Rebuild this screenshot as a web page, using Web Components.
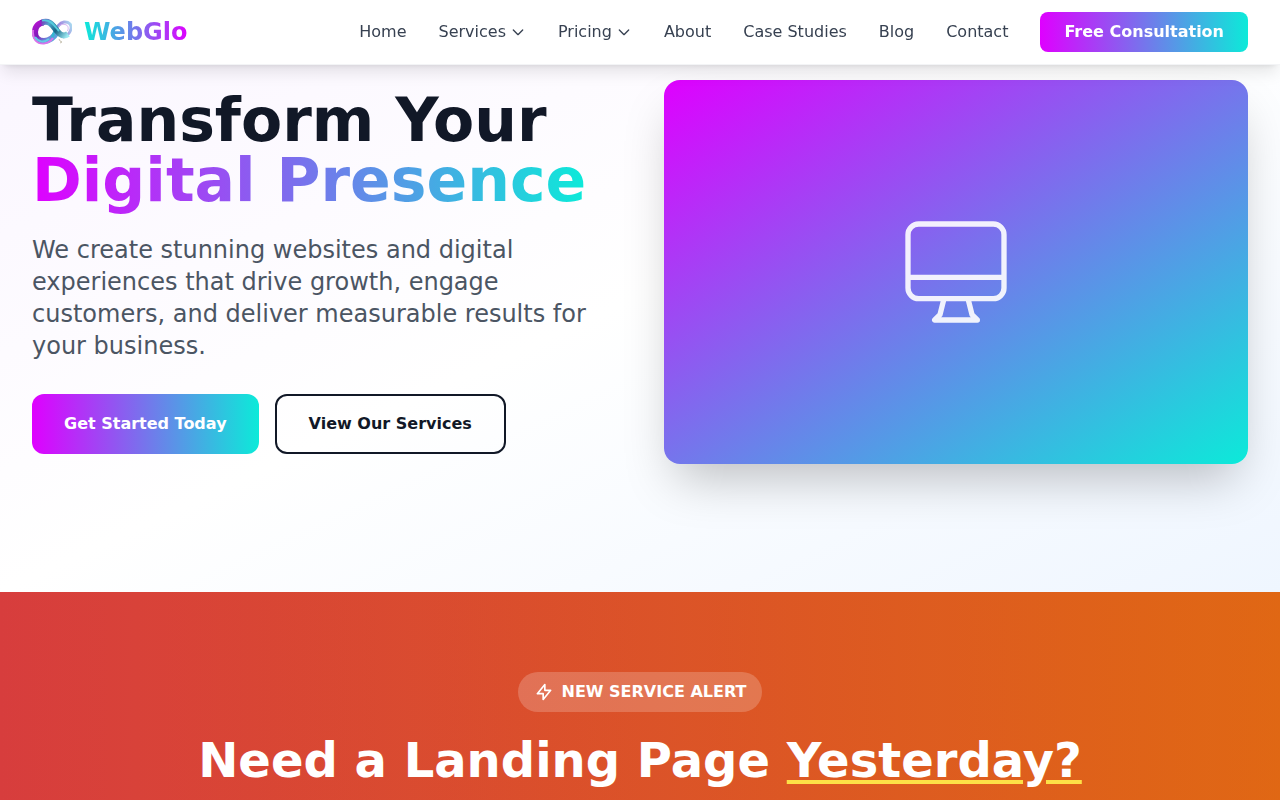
<!DOCTYPE html>
<html lang="en">
<head>
<meta charset="utf-8">
<meta name="viewport" content="width=device-width, initial-scale=1">
<title>WebGlo</title>
<style>
  :root {
    --magenta: #df00ff;
    --teal: #0cead9;
    --ink: #111827;
    --brand: linear-gradient(90deg, var(--magenta), var(--teal));
  }
  body {
    margin: 0;
    background: #fff;
    color: var(--ink);
    font: 16px/24px "DejaVu Sans", sans-serif;
  }
</style>
</head>
<body>
<site-header>
  <site-logo slot="brand">WebGlo</site-logo>
  <nav-link href="#home">Home</nav-link>
  <nav-link href="#services" menu>Services</nav-link>
  <nav-link href="#pricing" menu>Pricing</nav-link>
  <nav-link href="#about">About</nav-link>
  <nav-link href="#cases">Case Studies</nav-link>
  <nav-link href="#blog">Blog</nav-link>
  <nav-link href="#contact">Contact</nav-link>
  <action-link href="#consultation" variant="compact">Free Consultation</action-link>
</site-header>
<main>
  <hero-section>
    <span slot="title">Transform Your</span>
    <span slot="accent">Digital Presence</span>
    <span slot="lead">We create stunning websites and digital experiences that drive growth, engage customers, and deliver measurable results for your business.</span>
    <action-link slot="actions" href="#start">Get Started Today</action-link>
    <action-link slot="actions" href="#services" variant="outline">View Our Services</action-link>
  </hero-section>
  <alert-section>
    <span slot="badge">NEW SERVICE ALERT</span>
    <span slot="title">Need a Landing Page</span>
    <span slot="accent">Yesterday?</span>
  </alert-section>
</main>

<script>
  function define(name, html, setup) {
    const template = document.createElement('template');
    template.innerHTML = html;
    customElements.define(name, class extends HTMLElement {
      constructor() {
        super();
        this.attachShadow({ mode: 'open' }).append(template.content.cloneNode(true));
      }
      connectedCallback() {
        if (setup) setup(this, this.shadowRoot);
      }
    });
  }

  const passHref = (host, root) => {
    root.querySelector('a').href = host.getAttribute('href') || '#';
  };

  define('site-logo', `
    <style>
      :host { display: block; }
      a { display: flex; align-items: center; gap: 12px; text-decoration: none; }
      svg { display: block; width: 40px; height: 40px; }
      span {
        font-size: 24px; line-height: 32px; font-weight: 700;
        background: linear-gradient(90deg, var(--teal), var(--magenta));
        -webkit-background-clip: text; background-clip: text; color: transparent;
      }
    </style>
    <a href="#home">
      <svg viewBox="0 0 40 40" fill="none" aria-hidden="true">
        <defs>
          <linearGradient id="ring" x1="4" y1="10" x2="20" y2="32" gradientUnits="userSpaceOnUse">
            <stop offset="0" stop-color="#b414d0"/><stop offset=".45" stop-color="#7d1cb8"/>
            <stop offset=".75" stop-color="#6a8fdc"/><stop offset="1" stop-color="#4fb4dc"/>
          </linearGradient>
          <linearGradient id="band" x1="8" y1="8" x2="34" y2="26" gradientUnits="userSpaceOnUse">
            <stop offset="0" stop-color="#8a14b8"/><stop offset=".3" stop-color="#4fa8cc"/>
            <stop offset=".6" stop-color="#156486"/><stop offset="1" stop-color="#9eeaf2"/>
          </linearGradient>
          <linearGradient id="loop" x1="22" y1="22" x2="40" y2="14" gradientUnits="userSpaceOnUse">
            <stop offset="0" stop-color="#35b4d0"/><stop offset=".5" stop-color="#a48ce0"/>
            <stop offset="1" stop-color="#a9d8f0"/>
          </linearGradient>
        </defs>
        <path d="M25 20C21 27 17 29 12 29C6.500 29 3 25.500 3 20C3 14.500 7 10.500 12 10.500" stroke="url(#ring)" stroke-width="6"/>
        <path d="M1 18C0 27 5 32 12 31.500C16 31 19 29 21 26" stroke="#d873ea" stroke-width="2"/>
        <path d="M3 25C6 30 12 31 17 27" stroke="#62cbe5" stroke-width="2"/>
        <path d="M20 25C24 18 26 11 32 10C37 9.500 40 13 39 17C38 21 35 24 31 25" stroke="url(#loop)" stroke-width="3"/>
        <path d="M25 17C27 13 30 12 33 12.500C36 13 37 16 35.500 19" stroke="#d7b6f2" stroke-width="1"/>
        <path d="M9 11C18 7 21 14 25 19C28 23 32 25 36 22" stroke="url(#band)" stroke-width="6"/>
        <path d="M10 8.500C18 7 22 13 27 19" stroke="#55cbdd" stroke-width="2"/>
        <path d="M27 27l1 2 2 1-2 1" stroke="#c7c2b2" stroke-width="1"/>
      </svg>
      <span><slot></slot></span>
    </a>`);

  define('nav-link', `
    <style>
      :host { display: block; }
      a { display: flex; align-items: center; gap: 4px; color: #374151; text-decoration: none; white-space: nowrap; }
      svg { display: none; width: 16px; height: 16px; }
      :host([menu]) svg { display: block; }
    </style>
    <a><slot></slot>
      <svg viewBox="0 0 24 24" fill="none" stroke="currentColor" stroke-width="2" stroke-linecap="round" stroke-linejoin="round" aria-hidden="true"><path d="M19 9l-7 7-7-7"/></svg>
    </a>`, passHref);

  define('action-link', `
    <style>
      :host { display: block; }
      a {
        display: block; box-sizing: border-box; padding: 18px 32px; border-radius: 12px;
        background: var(--brand); color: #fff; font-weight: 600;
        text-align: center; text-decoration: none; white-space: nowrap;
      }
      :host([variant="compact"]) a { padding: 8px 24px; border-radius: 8px; }
      :host([variant="outline"]) a {
        padding: 16px 32px; border: 2px solid var(--ink); background: none; color: var(--ink);
      }
    </style>
    <a><slot></slot></a>`, passHref);

  define('site-header', `
    <style>
      :host {
        display: block; position: fixed; inset: 0 0 auto; z-index: 10; background: #fff;
        border-bottom: 1px solid #f3f4f6;
        box-shadow: 0 10px 15px -3px rgb(0 0 0 / .1), 0 4px 6px -4px rgb(0 0 0 / .1);
      }
      header {
        display: flex; align-items: center; justify-content: space-between;
        max-width: 1280px; margin: 0 auto; padding: 0 32px; min-height: 64px; box-sizing: border-box;
      }
      nav { display: flex; align-items: center; gap: 32px; }
      @media (max-width: 1100px) { ::slotted(nav-link) { display: none; } }
    </style>
    <header>
      <slot name="brand"></slot>
      <nav aria-label="Main"><slot></slot></nav>
    </header>`);

  define('hero-section', `
    <style>
      :host { display: block; background: linear-gradient(to bottom right, #faf5ff, #fff, #eff6ff); }
      .row {
        display: grid; grid-template-columns: 1fr 1fr; align-items: center; gap: 48px;
        max-width: 1280px; margin: 0 auto; padding: 80px 32px 128px; box-sizing: border-box;
      }
      h1 { margin: 0 0 24px; font-size: 60px; line-height: 60px; font-weight: 700; }
      h1 span {
        background: var(--brand); -webkit-background-clip: text; background-clip: text; color: transparent;
      }
      p { margin: 0 0 32px; font-size: 24px; line-height: 32px; color: #4b5563; }
      .actions { display: flex; flex-wrap: wrap; gap: 16px; }
      .card {
        display: grid; place-items: center; height: 384px; border-radius: 16px;
        background: linear-gradient(to bottom right, var(--magenta), var(--teal));
        box-shadow: 0 25px 50px -12px rgb(0 0 0 / .25);
      }
      svg { width: 128px; height: 128px; color: #fff; opacity: .9; }
      @media (max-width: 1000px) { .row { grid-template-columns: 1fr; } }
    </style>
    <section class="row">
      <div>
        <h1><slot name="title"></slot><br><span><slot name="accent"></slot></span></h1>
        <p><slot name="lead"></slot></p>
        <div class="actions"><slot name="actions"></slot></div>
      </div>
      <div class="card">
        <svg viewBox="0 0 24 24" fill="none" stroke="currentColor" stroke-width="1" stroke-linecap="round" stroke-linejoin="round" aria-hidden="true"><path d="M9.75 17L9 20l-1 1h8l-1-1-.75-3M3 13h18M5 17h14a2 2 0 002-2V5a2 2 0 00-2-2H5a2 2 0 00-2 2v10a2 2 0 002 2z"/></svg>
      </div>
    </section>`);

  define('alert-section', `
    <style>
      :host {
        display: block; color: #fff;
        background: linear-gradient(rgb(0 0 0 / .1), rgb(0 0 0 / .1)), linear-gradient(90deg, #ef4444, #f97316);
      }
      section {
        display: flex; flex-direction: column; align-items: center; gap: 24px;
        padding: 80px 32px; text-align: center;
      }
      .badge {
        display: flex; align-items: center; gap: 8px; padding: 8px 16px; border-radius: 20px;
        background: rgb(255 255 255 / .2); font-weight: 600;
      }
      svg { width: 20px; height: 20px; }
      h2 { margin: 0; font-size: 48px; line-height: 48px; font-weight: 700; }
      h2 span {
        text-decoration: underline; text-decoration-color: #fde047;
        text-decoration-thickness: 4px; text-underline-offset: 3px;
      }
    </style>
    <section>
      <div class="badge">
        <svg viewBox="0 0 24 24" fill="none" stroke="currentColor" stroke-width="2" stroke-linecap="round" stroke-linejoin="round" aria-hidden="true"><path d="M13 10V3L4 14h7v7l9-11h-7z"/></svg>
        <slot name="badge"></slot>
      </div>
      <h2><slot name="title"></slot> <span><slot name="accent"></slot></span></h2>
    </section>`);
</script>
</body>
</html>
